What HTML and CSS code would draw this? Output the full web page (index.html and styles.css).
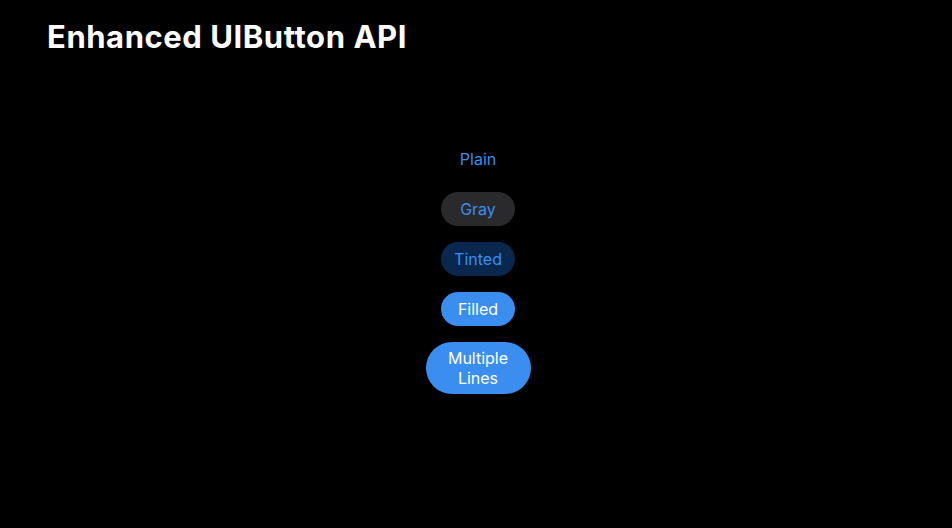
FILE: index.html
```html
<!DOCTYPE html>
<html>
<head>
<meta charset="utf-8">
<link rel="stylesheet" href="styles.css">
</head>
<body>
<div class="slide">
  <h1 class="title">Enhanced UIButton API</h1>
  <div class="buttons">
    <div class="btn plain">Plain</div>
    <div class="btn gray">Gray</div>
    <div class="btn tinted">Tinted</div>
    <div class="btn filled">Filled</div>
    <div class="btn filled multi">Multiple<br>Lines</div>
  </div>
</div>
</body>
</html>
```
FILE: styles.css
```css
html, body {
  margin: 0;
  padding: 0;
  background: #000;
}
.slide {
  width: 952px;
  height: 528px;
  background: #000;
  font-family: Inter, "Noto Sans", sans-serif;
  box-sizing: border-box;
  padding: 15px 0 0 47px;
}
.title {
  margin: 0;
  color: #fff;
  font-size: 31px;
  font-weight: 700;
  letter-spacing: 0.55px;
  line-height: 44px;
}
.buttons {
  display: flex;
  flex-direction: column;
  align-items: center;
  gap: 16px;
  margin-top: 83px;
  margin-left: -43px;
}
.btn {
  box-sizing: border-box;
  height: 34px;
  width: 74px;
  border-radius: 17px;
  display: flex;
  align-items: center;
  justify-content: center;
  font-size: 16px;
  line-height: 20px;
  color: #3a8ef0;
  text-align: center;
}
.gray {
  background: #2a2a2c;
}
.tinted {
  background: #0a2750;
}
.filled {
  background: #3a8ef0;
  color: #fff;
}
.multi {
  height: 52px;
  width: 105px;
  border-radius: 26px;
}
```
